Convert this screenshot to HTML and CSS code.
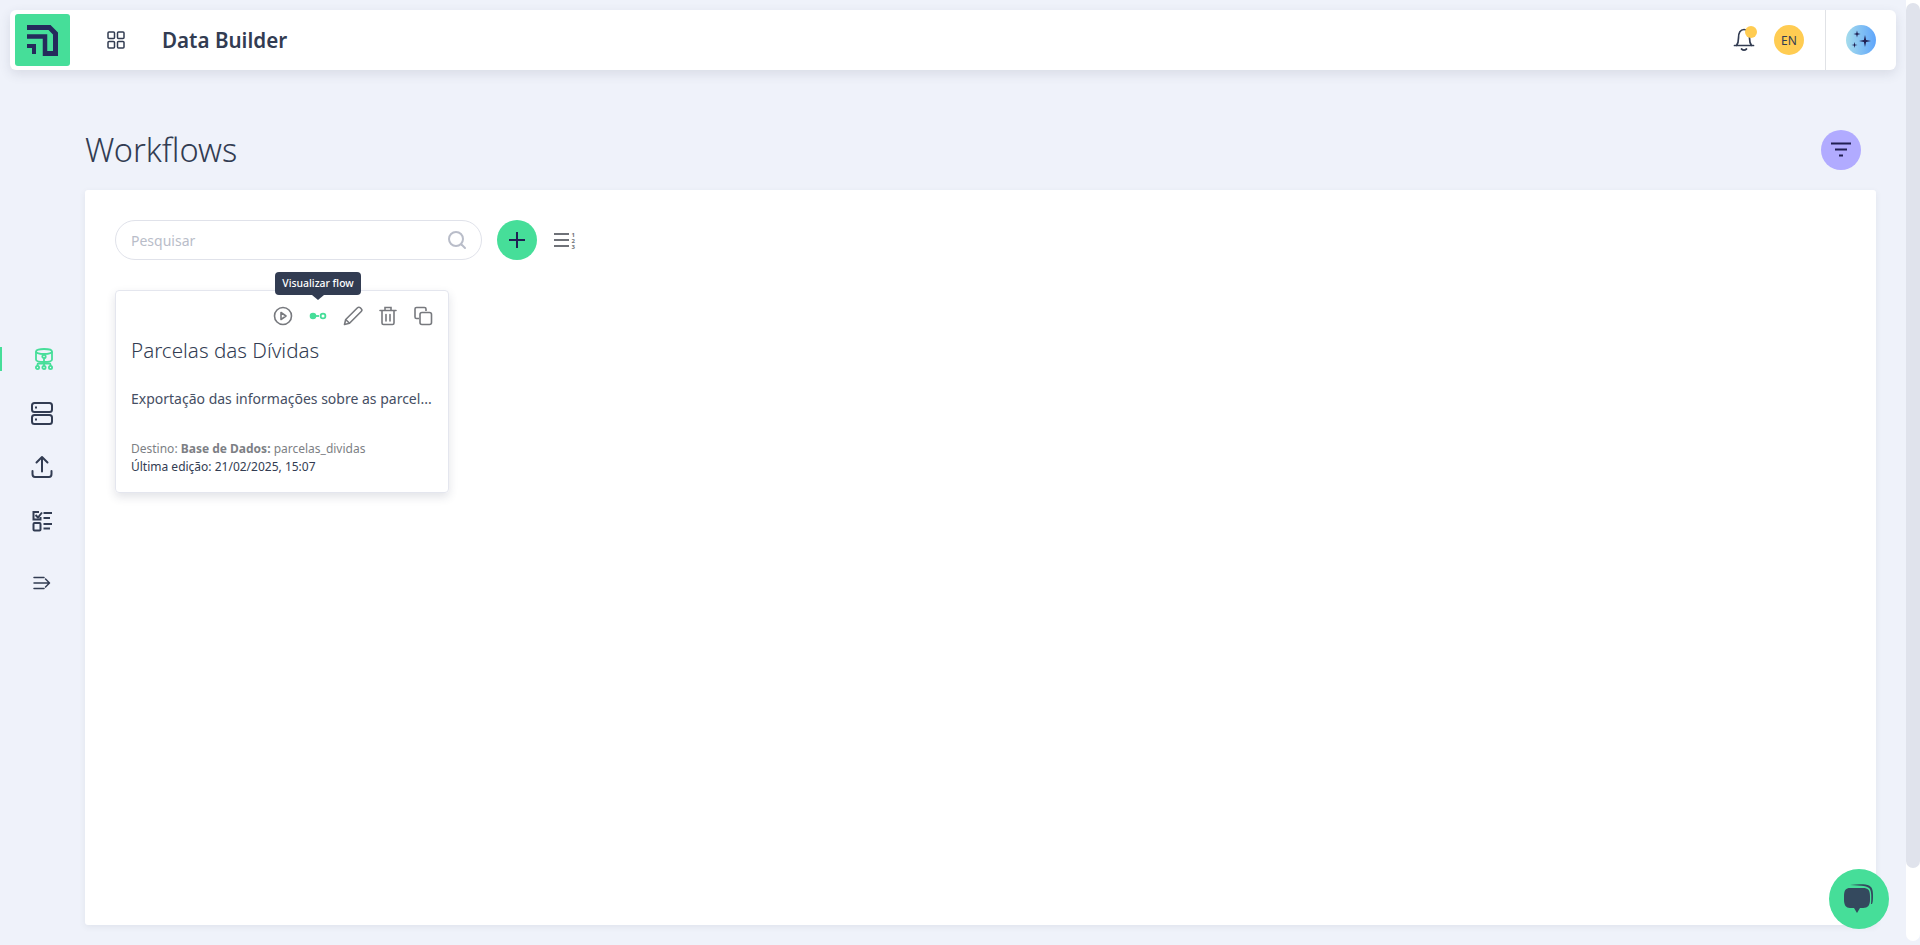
FILE: index.html
```html
<!DOCTYPE html>
<html lang="en">
<head>
    <meta charset="UTF-8">
    <meta name="viewport" content="width=device-width, initial-scale=1.0">
    <title>Data Builder</title>
    <link rel="stylesheet" href="styles.css">
</head>
<body>
    <div class="page">
        <header class="topbar">
            <div class="logo">
                <svg width="31" height="31" viewBox="27 24 31 31" fill="none" stroke="#252a5c">
                    <path d="M27 26.500h22.500l6 6V52.500H44" stroke-width="5"/>
                    <path d="M27 35.500h18V55" stroke-width="4.500"/>
                    <path d="M27 45h7v8" stroke-width="4"/>
                </svg>
            </div>
            <button class="grid-btn">
                <svg width="18" height="18" viewBox="0 0 18 18" fill="none" stroke="#323c52" stroke-width="1.500">
                    <rect x="1" y="1" width="6.500" height="6.500" rx="1"/>
                    <rect x="10.500" y="1" width="6.500" height="6.500" rx="1"/>
                    <rect x="1" y="10.500" width="6.500" height="6.500" rx="1"/>
                    <rect x="10.500" y="10.500" width="6.500" height="6.500" rx="1"/>
                </svg>
            </button>
            <h2 class="app-name">Data Builder</h2>
            <div class="topbar-right">
                <div class="bell">
                    <svg width="22" height="26" viewBox="0 0 22 26" fill="none" stroke="#323c52" stroke-width="1.700" stroke-linecap="round">
                        <path d="M1.500 18.500h19M3.500 18.500c1.500-2 2-4 2-7.500C5.500 5.500 7.500 2.500 11 2.500s5.500 3 5.500 8.500c0 3.500.5 5.500 2 7.500"/>
                        <path d="M8.500 22c1.500 1.300 3.500 1.300 5 0"/>
                    </svg>
                    <span class="bell-dot"></span>
                </div>
                <span class="lang">EN</span>
                <div class="ai-box">
                    <span class="ai-btn">
                        <svg width="24" height="24" viewBox="0 0 24 24" fill="#201f52">
                            <path d="M16 7l1.100 4.900L22 13l-4.900 1.100L16 19l-1.100-4.900L10 13l4.900-1.100z"/>
                            <path d="M8 2.500l.7 2.800 2.800.7-2.800.7L8 9.500l-.7-2.800L4.500 6l2.800-.7z"/>
                            <path d="M5.500 14l.6 2.400 2.400.6-2.400.6L5.500 20l-.6-2.400-2.400-.6 2.400-.6z"/>
                        </svg>
                    </span>
                </div>
            </div>
        </header>

        <div class="layout">
            <nav class="sidebar">
                <a class="side-item active">
                    <svg width="20" height="22" viewBox="0 0 20 22" fill="none" stroke="#46de99" stroke-width="1.800">
                        <ellipse cx="10" cy="3.500" rx="8" ry="2.500"/>
                        <path d="M2 3.500v8c0 1.500 3.500 2.500 8 2.500s8-1 8-2.500v-8"/>
                        <circle cx="10" cy="8.500" r="1.700"/>
                        <path d="M10 10.200V18M3.500 18v-1.500c0-.6.400-1 1-1h11c.6 0 1 .4 1 1V18"/>
                        <circle cx="3.500" cy="19.500" r="1.600"/>
                        <circle cx="10" cy="19.500" r="1.600"/>
                        <circle cx="16.500" cy="19.500" r="1.600"/>
                    </svg>
                </a>
                <a class="side-item">
                    <svg width="24" height="24" viewBox="0 0 24 24" fill="none" stroke="#323c52" stroke-width="2">
                        <rect x="2" y="2" width="20" height="9" rx="2.500"/>
                        <rect x="2" y="14" width="20" height="9" rx="2.500"/>
                        <path d="M5 6.500h2M5 18.500h2"/>
                    </svg>
                </a>
                <a class="side-item">
                    <svg width="22" height="24" viewBox="0 0 22 24" fill="none" stroke="#323c52" stroke-width="2" stroke-linecap="round" stroke-linejoin="round">
                        <path d="M11 16.500V2M5.500 7.500L11 2l5.500 5.500"/>
                        <path d="M1.500 16v3c0 1.800 1 3 2.500 3h14c1.500 0 2.500-1.200 2.500-3v-3"/>
                    </svg>
                </a>
                <a class="side-item">
                    <svg width="22" height="22" viewBox="0 0 22 22" fill="none" stroke="#323c52" stroke-width="2">
                        <path d="M8 2H2.500v7.500h7V7"/>
                        <path d="M4.500 5l2.500 2.500L11 2.500"/>
                        <rect x="2.500" y="13" width="7" height="7.500" rx="1"/>
                        <path d="M12.500 3h8.500M12.500 8h6.500M12.500 14h8.500M12.500 18.500h6.500"/>
                    </svg>
                </a>
                <a class="side-item expand">
                    <svg width="18" height="14" viewBox="0 0 18 14" fill="none" stroke="#323c52" stroke-width="1.500" stroke-linecap="round" stroke-linejoin="round">
                        <path d="M1 1.500h10M1 7h15M1 12.500h10M12.500 3l4 4-4 4"/>
                    </svg>
                </a>
            </nav>

            <main class="content">
                <div class="title-row">
                    <h1>Workflows</h1>
                    <button class="filter-btn">
                        <svg width="20" height="16" viewBox="0 0 20 16" fill="none" stroke="#201f52" stroke-width="2">
                            <path d="M0 1.500h20M4 7.500h12M8 13.500h4"/>
                        </svg>
                    </button>
                </div>
                <section class="panel">
                    <div class="toolbar">
                        <div class="search">
                            <span class="search-text">Pesquisar</span>
                            <svg width="20" height="20" viewBox="0 0 20 20" fill="none" stroke="#b9bdc9" stroke-width="2" stroke-linecap="round">
                                <circle cx="9" cy="9" r="7"/>
                                <path d="M14.500 14.500l3.500 3.500"/>
                            </svg>
                        </div>
                        <button class="add-btn">
                            <svg width="16" height="16" viewBox="0 0 16 16" stroke="#201f52" stroke-width="2">
                                <path d="M8 0v16M0 8h16"/>
                            </svg>
                        </button>
                        <svg class="sort-icon" width="22" height="18" viewBox="0 0 22 18" fill="#6f7278">
                            <rect x="0" y="2" width="15" height="2"/>
                            <rect x="0" y="8" width="15" height="2"/>
                            <rect x="0" y="14" width="15" height="2"/>
                            <text x="17.500" y="5.500" class="sort-num">1</text>
                            <text x="17.500" y="11.500" class="sort-num">2</text>
                            <text x="17.500" y="17.500" class="sort-num">3</text>
                        </svg>
                    </div>

                    <article class="card">
                        <div class="tooltip">Visualizar flow</div>
                        <div class="card-actions">
                            <svg width="20" height="20" viewBox="0 0 20 20" fill="none" stroke="#77797e" stroke-width="1.600" stroke-linejoin="round">
                                <circle cx="10" cy="10" r="8.500"/>
                                <path d="M8 6.500l5 3.500-5 3.500z"/>
                            </svg>
                            <svg width="20" height="20" viewBox="0 0 20 20" fill="none" stroke="#46de99" stroke-width="1.800">
                                <circle cx="5" cy="10" r="2.400" fill="#46de99"/>
                                <path d="M7 10h4"/>
                                <circle cx="15" cy="10" r="2.400"/>
                            </svg>
                            <svg width="20" height="20" viewBox="0 0 20 20" fill="none" stroke="#77797e" stroke-width="1.600" stroke-linejoin="round">
                                <path d="M1.500 18.500l1.200-5L14.500 1.800c.8-.8 2-.8 2.800 0l.9.9c.8.800.8 2 0 2.800L6.500 17.300z"/>
                                <path d="M2.700 13.500l3.800 3.800"/>
                            </svg>
                            <svg width="20" height="20" viewBox="0 0 20 20" fill="none" stroke="#77797e" stroke-width="1.600" stroke-linecap="round">
                                <path d="M2 4.500h16M7 4.500V1.500h6v3M4 4.500v12.500c0 1 .5 1.500 1.500 1.500h9c1 0 1.500-.5 1.500-1.500V4.500M8 8.500v6.500M12 8.500v6.500"/>
                            </svg>
                            <svg width="20" height="20" viewBox="0 0 20 20" fill="none" stroke="#77797e" stroke-width="1.600">
                                <path d="M13 5V3c0-1-.5-1.500-1.500-1.500h-8C2.500 1.500 2 2 2 3v8c0 1 .5 1.500 1.500 1.500H6"/>
                                <rect x="7" y="6.500" width="11.500" height="12" rx="2"/>
                            </svg>
                        </div>
                        <h3 class="card-title">Parcelas das Dívidas</h3>
                        <p class="card-desc">Exportação das informações sobre as parcel...</p>
                        <p class="card-dest">Destino: <b>Base de Dados:</b> parcelas_dividas</p>
                        <p class="card-date">Última edição: 21/02/2025, 15:07</p>
                    </article>
                </section>
            </main>
        </div>
    </div>

    <div class="scrollbar"><div class="scrollbar-thumb"></div></div>

    <button class="chat-btn">
        <svg width="34" height="34" viewBox="0 0 34 34" fill="#34495e">
            <path d="M8 3c8-1 16-1 19 .5 3 1.500 4 4.500 4 9.500 0 4 0 7-1 9h-1c.5-7 .5-12-1-15C26 4 20 3.500 8 3z"/>
            <path d="M8 6h13c5 0 7 2 7 8v4c0 5-2 8-7 8h-3l-3 5-3-5H8c-4 0-6-3-6-8v-4c0-6 2-8 6-8z"/>
        </svg>
    </button>
</body>
</html>
```

FILE: styles.css
```css
* {
    box-sizing: border-box;
}
html, body {
    height: 100%;
}
body {
    font-family: 'Noto Sans', sans-serif;
    background: #eff2fa;
    color: #323c52;
    margin: 0;
    overflow: hidden;
    display: flex;
}
button {
    border: none;
    padding: 0;
    background: none;
    display: flex;
    align-items: center;
    justify-content: center;
}
h1, h2, h3, p {
    margin: 0;
    font-weight: 400;
}

.page {
    flex: 1;
    min-width: 0;
    padding-top: 10px;
}

/* top bar */
.topbar {
    height: 60px;
    margin: 0 10px;
    background: #fff;
    border-radius: 6px;
    box-shadow: 0 4px 12px rgba(50, 60, 82, 0.12);
    display: flex;
    align-items: center;
    padding-left: 5px;
}
.logo {
    width: 55px;
    height: 52px;
    background: #46de99;
    border-radius: 3px;
    display: flex;
    align-items: center;
    justify-content: center;
}
.grid-btn {
    margin-left: 37px;
}
.app-name {
    font-size: 20.6px;
    font-weight: 600;
    margin-left: 37px;
}
.topbar-right {
    margin-left: auto;
    display: flex;
    align-items: center;
    height: 100%;
}
.bell {
    position: relative;
    height: 26px;
    margin-right: 19px;
}
.bell-dot {
    position: absolute;
    top: -1px;
    right: -2px;
    width: 12px;
    height: 12px;
    border-radius: 50%;
    background: #ffcc52;
}
.lang {
    width: 30px;
    height: 30px;
    border-radius: 50%;
    background: #ffcc52;
    font-size: 12px;
    display: flex;
    align-items: center;
    justify-content: center;
}
.ai-box {
    margin-left: 21px;
    height: 100%;
    width: 71px;
    border-left: 1px solid #e0e2e6;
    display: flex;
    align-items: center;
    padding-left: 20px;
}
.ai-btn {
    width: 30px;
    height: 30px;
    border-radius: 50%;
    background: linear-gradient(90deg, #a5dcec, #5fa5fb);
    display: flex;
    align-items: center;
    justify-content: center;
}

.layout {
    display: flex;
}

/* side nav */
.sidebar {
    width: 85px;
    padding-top: 262px;
    display: flex;
    flex-direction: column;
}
.side-item {
    height: 54px;
    display: flex;
    align-items: center;
    justify-content: center;
    padding-right: 1px;
    position: relative;
}
.side-item.active {
    padding: 0 0 0 3px;
}
.side-item.active::before {
    content: "";
    position: absolute;
    left: 0;
    top: 15px;
    width: 2px;
    height: 24px;
    background: #46de99;
}
.side-item.expand {
    margin-top: 8px;
    padding-right: 1px;
}

/* main */
.content {
    flex: 1;
    min-width: 0;
    padding-right: 30px;
}
.title-row {
    height: 120px;
    display: flex;
    align-items: center;
    justify-content: space-between;
    padding: 40px 15px 0 0;
}
.title-row h1 {
    font-size: 32.6px;
    font-weight: 300;
    margin-top: -2px;
}
.filter-btn {
    width: 40px;
    height: 40px;
    border-radius: 50%;
    background: #b1abff;
}
.panel {
    height: 735px;
    background: #fff;
    border-radius: 3px;
    box-shadow: 0 2px 6px rgba(50, 60, 82, 0.08);
    padding: 30px;
}
.toolbar {
    display: flex;
    align-items: center;
    height: 40px;
}
.search {
    width: 367px;
    height: 40px;
    border: 1px solid #e0e2ea;
    border-radius: 20px;
    display: flex;
    align-items: center;
    justify-content: space-between;
    padding: 0 14px 0 15px;
}
.search-text {
    font-size: 14px;
    color: #b9bdc9;
}
.add-btn {
    width: 40px;
    height: 40px;
    border-radius: 50%;
    background: #46de99;
    margin-left: 15px;
}
.sort-icon {
    margin-left: 17px;
}
.sort-num {
    font-size: 6px;
    font-weight: 700;
}

/* card */
.card {
    position: relative;
    width: 334px;
    height: 203px;
    margin-top: 30px;
    border: 1px solid #e4e6ee;
    border-radius: 4px;
    box-shadow: 0 4px 10px rgba(50, 60, 82, 0.14);
    padding: 15px 14px 0 15px;
}
.card-actions {
    display: flex;
    justify-content: flex-end;
    gap: 15px;
    height: 20px;
    padding-right: 1px;
}
.card-title {
    font-size: 20.6px;
    font-weight: 300;
    line-height: 27px;
    margin-top: 11px;
}
.card-desc {
    font-size: 14px;
    line-height: 19px;
    margin-top: 25px;
    color: #454e63;
    white-space: nowrap;
}
.card-dest, .card-date {
    font-size: 12px;
    line-height: 18px;
}
.card-dest {
    color: #7d7f85;
    margin-top: 32px;
}
.tooltip {
    position: absolute;
    top: -19px;
    left: 159px;
    width: 86px;
    height: 23px;
    background: #323c52;
    color: #fff;
    font-size: 10.4px;
    font-weight: 500;
    line-height: 23px;
    text-align: center;
    border-radius: 4px;
}
.tooltip::after {
    content: "";
    position: absolute;
    left: 37px;
    bottom: -5px;
    border-top: 5px solid #323c52;
    border-left: 6px solid transparent;
    border-right: 6px solid transparent;
}

/* fake page scrollbar */
.scrollbar {
    width: 14px;
    height: 941px;
    padding-top: 3px;
    background: #fff;
    border-radius: 0 0 7px 7px;
}
.scrollbar-thumb {
    height: 865px;
    background: #e0e3ec;
    border-radius: 7px;
}

.chat-btn {
    position: fixed;
    right: 31px;
    bottom: 16px;
    width: 60px;
    height: 60px;
    border-radius: 50%;
    background: #46de99;
}
```
